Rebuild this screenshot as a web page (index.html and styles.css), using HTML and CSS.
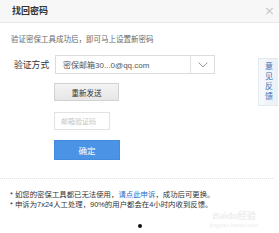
FILE: index.html
```html
<!DOCTYPE html>
<html lang="zh-CN">
<head>
<meta charset="utf-8">
<title>找回密码</title>
<link rel="stylesheet" href="styles.css">
</head>
<body>
<div class="dialog">
  <div class="header">
    <span class="title">找回密码</span>
    <span class="close">×</span>
  </div>
  <p class="intro">验证密保工具成功后，即可马上设置新密码</p>
  <div class="row">
    <span class="label">验证方式</span>
    <div class="select">
      <span class="select-text">密保邮箱30...0@qq.com</span>
      <span class="select-arrow">
        <svg width="10" height="6" viewBox="0 0 10 6"><path d="M0.5 0.5 L5 5 L9.5 0.5" fill="none" stroke="#9a9a9a" stroke-width="1"/></svg>
      </span>
    </div>
  </div>
  <div class="actions">
    <button class="btn btn-resend">重新发送</button>
    <input class="code-input" type="text" placeholder="邮箱验证码">
    <button class="btn btn-confirm">确定</button>
  </div>
  <div class="notes">
    <p class="note">* 如您的密保工具都已无法使用，<span class="link">请点此申诉</span>，成功后可更换。</p>
    <p class="note">* 申诉为7x24人工处理，90%的用户都会在4小时内收到反馈。</p>
  </div>
  <div class="dot"></div>
</div>
<div class="feedback">意见反馈</div>
<div class="watermark"><span class="wm-logo">Baidu经验</span><span class="wm-url">jingyan.baidu.com</span></div>
</body>
</html>
```
FILE: styles.css
```css
html, body {
  margin: 0;
  padding: 0;
  background: #fff;
}
body {
  width: 279px;
  height: 233px;
  overflow: hidden;
  position: relative;
  font-family: "Liberation Sans", "Noto Sans CJK SC", sans-serif;
  color: #333;
}
.dialog {
  display: flex;
  flex-direction: column;
}
.header {
  height: 22px;
  background: #f7f7f7;
  border-bottom: 1px solid #e8e8e8;
  display: flex;
  align-items: center;
  justify-content: space-between;
  padding: 0 4px 0 12px;
}
.title {
  font-size: 9px;
  font-weight: bold;
  color: #333;
  line-height: 10px;
}
.close {
  font-size: 13px;
  line-height: 13px;
  color: #c8c8c8;
  font-family: "DejaVu Sans", sans-serif;
  margin-top: -2px;
}
.intro {
  margin: 12px 0 0 11px;
  font-size: 7.5px;
  line-height: 10px;
  color: #666;
}
.row {
  display: flex;
  align-items: center;
  margin-top: 10px;
  padding-left: 14px;
  gap: 6px;
}
.label {
  font-size: 8.8px;
  line-height: 10px;
  color: #333;
  width: 35px;
  white-space: nowrap;
}
.select {
  width: 158px;
  height: 17px;
  border: 1px solid #dcdcdc;
  display: flex;
  align-items: center;
}
.select-text {
  flex: 1;
  padding-left: 7px;
  font-size: 8px;
  color: #555;
  white-space: nowrap;
}
.select-arrow {
  width: 23px;
  height: 17px;
  border-left: 1px solid #e2e2e2;
  display: flex;
  align-items: center;
  justify-content: center;
}
.actions {
  display: flex;
  flex-direction: column;
  align-items: flex-start;
  padding-left: 54px;
  margin-top: 9px;
}
.btn {
  font-family: inherit;
  padding: 0;
  cursor: pointer;
}
.btn-resend {
  width: 65px;
  height: 18px;
  background: linear-gradient(#f3f3f3, #e6e6e6);
  border: 1px solid #d2d2d2;
  font-size: 7.5px;
  color: #333;
}
.code-input {
  margin-top: 11px;
  width: 56px;
  height: 18px;
  box-sizing: border-box;
  border: 1px solid #e2e2e2;
  padding: 0 0 0 6px;
  font-family: inherit;
  font-size: 7px;
  color: #333;
  outline: none;
}
.code-input::placeholder {
  color: #c4c4c4;
}
.btn-confirm {
  margin-top: 10px;
  width: 66px;
  height: 20px;
  background: #4b93e5;
  border: 1px solid #438be0;
  color: #fff;
  font-size: 8.5px;
}
.notes {
  margin-top: 18px;
  border-top: 1px dotted #dddddd;
  margin-right: 6px;
  padding: 11px 0 0 10px;
}
.note {
  margin: 0;
  font-size: 7.4px;
  line-height: 10px;
  color: #333;
  white-space: nowrap;
}
.link {
  color: #2c66c4;
}
.dot {
  width: 4px;
  height: 4px;
  border-radius: 50%;
  background: #111;
  align-self: center;
  margin-top: 14px;
}
.feedback {
  position: absolute;
  left: 258px;
  top: 58px;
  width: 12px;
  height: 41px;
  padding: 3px 3px 2px 4px;
  background: linear-gradient(90deg, #f7f9fc, #e9f0f8);
  border: 1px solid #e4e9f0;
  border-right: none;
  font-size: 8px;
  line-height: 10px;
  color: #3d6eb0;
  text-align: center;
}
.watermark {
  position: absolute;
  left: 210px;
  top: 211px;
  display: flex;
  flex-direction: column;
  align-items: center;
  color: #ededed;
}
.wm-logo {
  font-size: 9px;
  font-weight: bold;
  line-height: 10px;
}
.wm-url {
  font-size: 6px;
  line-height: 8px;
}
```
